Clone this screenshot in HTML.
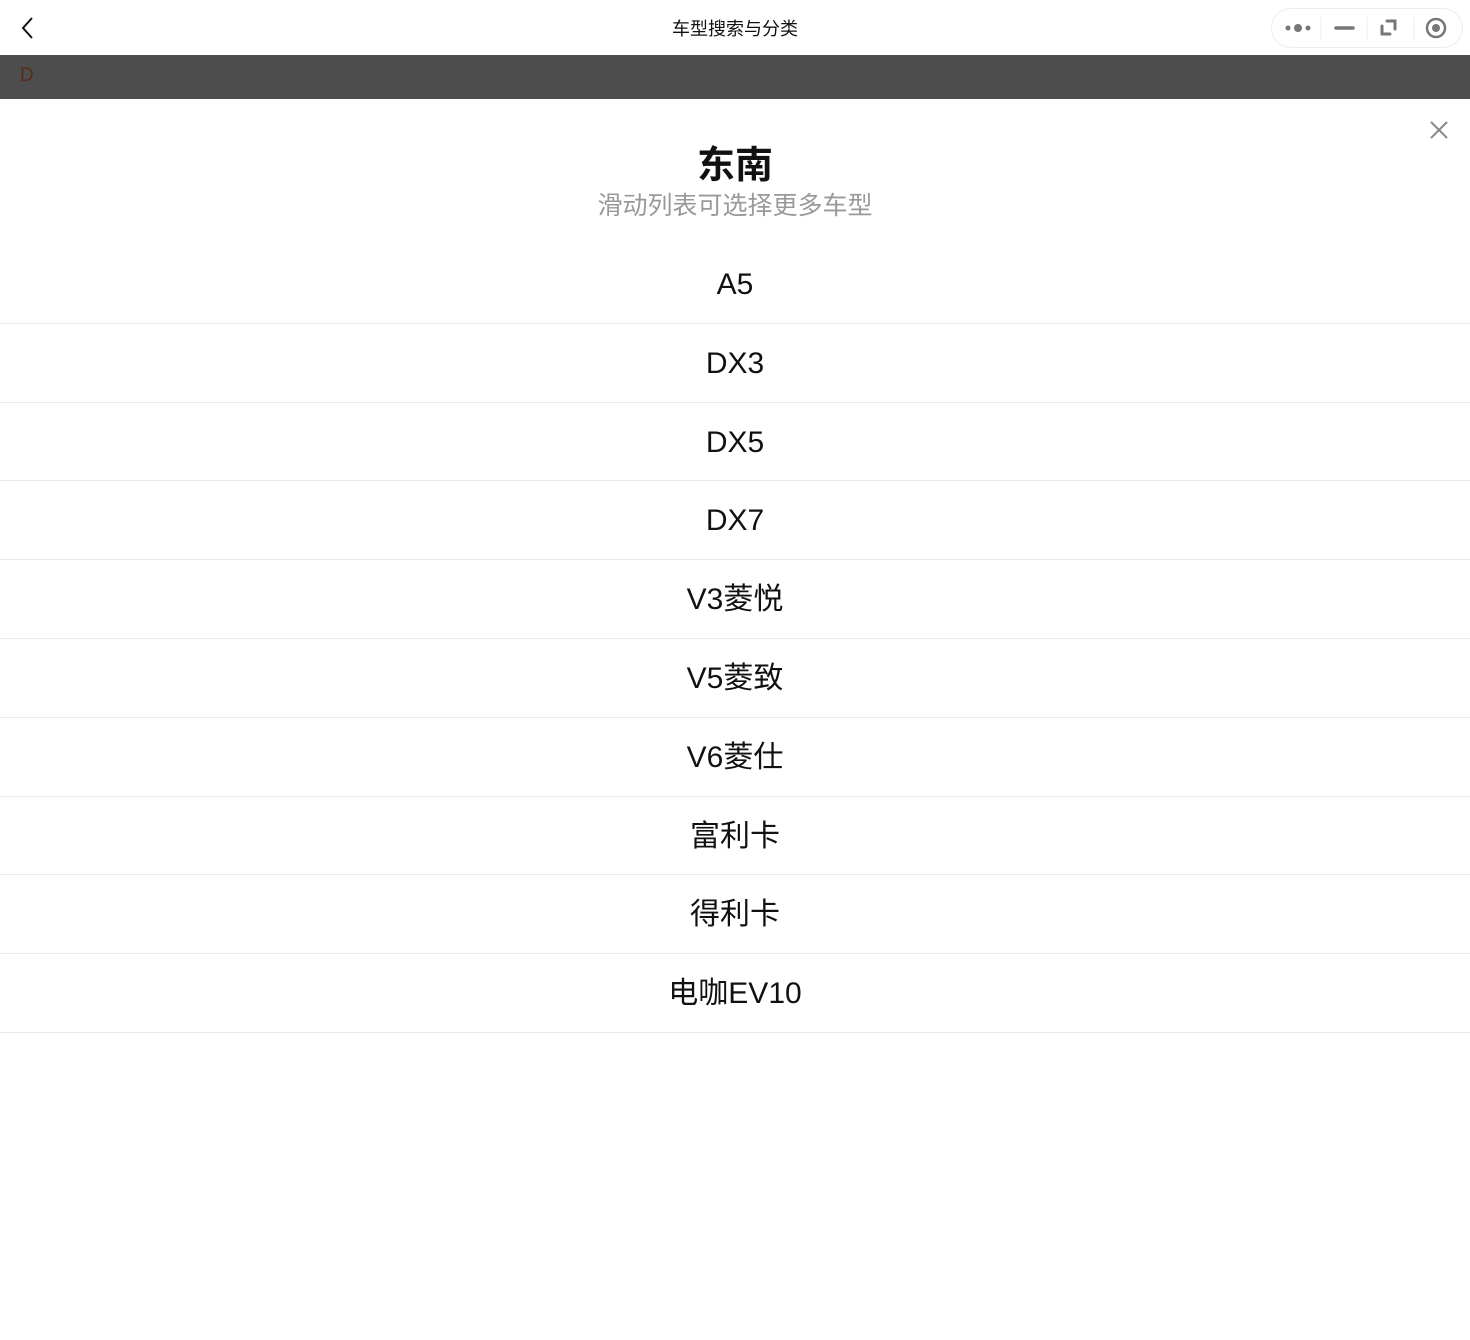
<!DOCTYPE html>
<html><head><meta charset="utf-8"><style>
*{margin:0;padding:0;box-sizing:border-box}
body{width:1470px;height:1340px;background:#fff;font-family:"Liberation Sans","Noto Sans CJK SC",sans-serif;position:relative;overflow:hidden}
.hdr{height:55px;position:relative}
.hdr .t{position:absolute;left:0;right:0;top:15px;text-align:center;font-size:18px;color:#111}
.cap{position:absolute;left:1271px;top:8px;width:192px;height:40px;border:1px solid #eee;border-radius:20px}
.bar{height:44px;background:#4d4d4d;color:#5a2a1a;font-size:19px;padding:10px 0 0 20px}
h1{position:absolute;top:134px;left:0;right:0;text-align:center;font-size:38px;font-weight:bold;color:#111}
.sub{position:absolute;top:186px;left:0;right:0;text-align:center;font-size:25px;color:#999}
.list{position:absolute;top:245px;left:0;width:1470px}
.row{height:78.8px;border-bottom:1px solid #e8e8e8;text-align:center;font-size:30px;line-height:80px;color:#111}
</style></head><body>
<div class="hdr"><svg style="position:absolute;left:20px;top:16px" width="16" height="24"><path d="M12 2L3 12l9 10" stroke="#111" stroke-width="2" fill="none"/></svg>
<div class="t">车型搜索与分类</div>
<div class="cap"><svg width="192" height="40">
<circle cx="16" cy="19" r="2.5" fill="#777"/><circle cx="26" cy="19" r="4" fill="#777"/><circle cx="36" cy="19" r="2.5" fill="#777"/>
<line x1="49" y1="8" x2="49" y2="31" stroke="#eee"/>
<line x1="64" y1="19" x2="81" y2="19" stroke="#777" stroke-width="3.5" stroke-linecap="round"/>
<line x1="95" y1="8" x2="95" y2="31" stroke="#eee"/>
<path d="M110 17v8h8M115 12h8v8" stroke="#777" stroke-width="3" fill="none" stroke-linecap="round"/>
<line x1="142" y1="8" x2="142" y2="31" stroke="#eee"/>
<circle cx="164" cy="19" r="9" stroke="#777" stroke-width="2.5" fill="none"/><circle cx="164" cy="19" r="4" fill="#777"/>
</svg></div></div>
<div class="bar">D</div>
<svg style="position:absolute;left:1430px;top:121px" width="18" height="18"><path d="M1 1l16 16M17 1L1 17" stroke="#888" stroke-width="2"/></svg>
<h1>东南</h1>
<div class="sub">滑动列表可选择更多车型</div>
<div class="list">
<div class="row">A5</div><div class="row">DX3</div><div class="row">DX5</div><div class="row">DX7</div><div class="row">V3菱悦</div><div class="row">V5菱致</div><div class="row">V6菱仕</div><div class="row">富利卡</div><div class="row">得利卡</div><div class="row">电咖EV10</div>
</div>
</body></html>
